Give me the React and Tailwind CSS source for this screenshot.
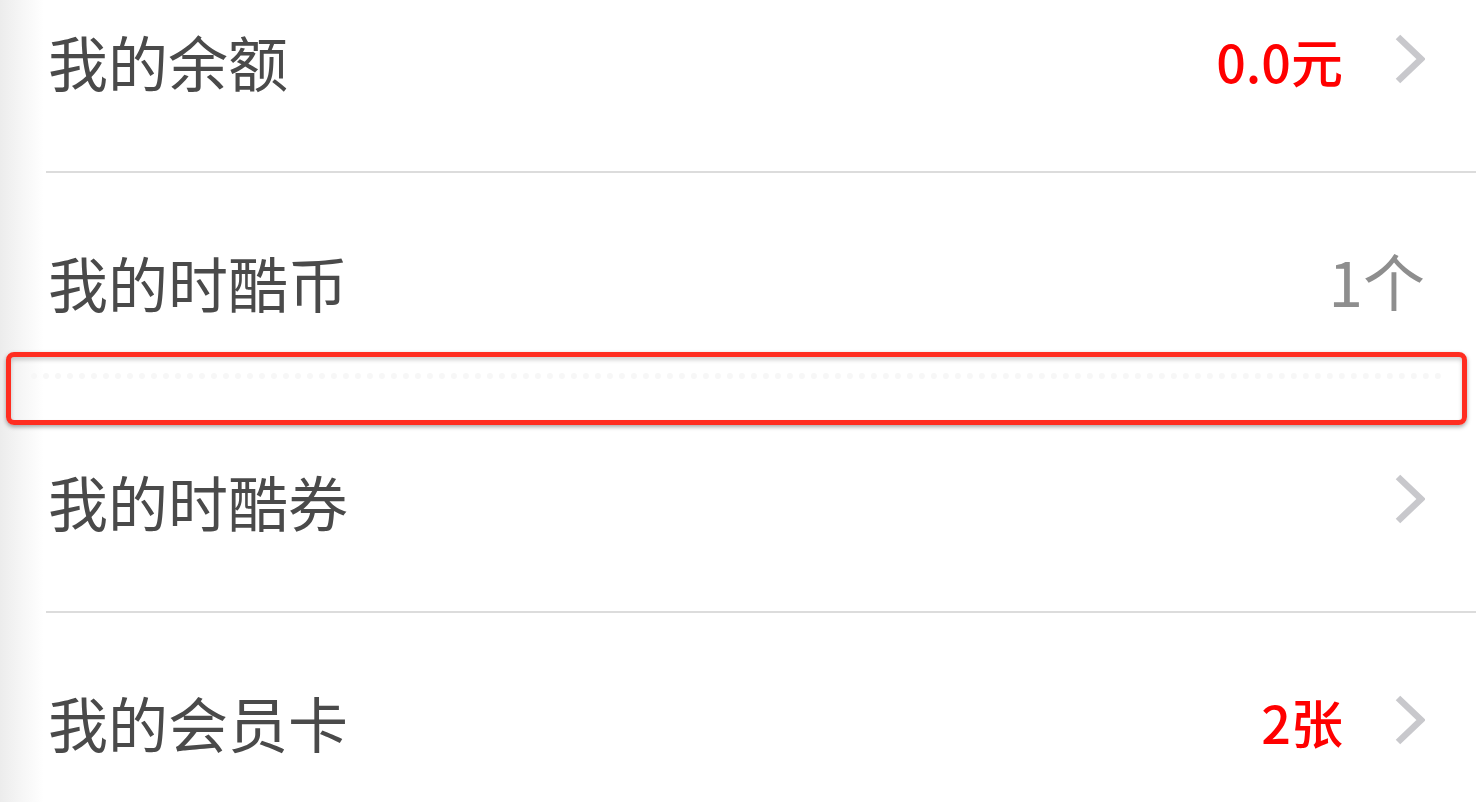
import React from "react";

const FONT = { fontFamily: '"Noto Sans CJK SC", "Noto Sans", sans-serif' };

function Chevron() {
  return (
    <svg width="30" height="50" viewBox="0 0 30 50" className="shrink-0">
      <polyline
        points="3,3 26,25 3,47"
        fill="none"
        stroke="#c8c8cc"
        strokeWidth="6.5"
        strokeLinejoin="miter"
      />
    </svg>
  );
}

function Row({ label, value, valueClass, chevron = true, border = true, first = false }) {
  return (
    <div className={`h-[220px] ml-[46px] flex items-center pb-[3px] pl-[2px] pr-[51px] ${border ? "border-b-2 border-[#dcdcdc]" : ""} ${first ? "-mt-[47px]" : ""}`}>
      <div className="flex-1 text-[60px] leading-none text-[#4a4a4a]">{label}</div>
      {value && <div className={valueClass}>{value}</div>}
      {chevron && <div className="ml-[52px] flex items-center -mt-[4px]"><Chevron /></div>}
    </div>
  );
}

export default function App() {
  return (
    <div
      className="relative w-full h-[802px] overflow-hidden bg-[linear-gradient(90deg,#ececec_0px,#f7f7f7_24px,#ffffff_44px)]"
      style={FONT}
    >
      <div className="flex flex-col">
        <Row
          first
          label="我的余额"
          value="0.0元"
          valueClass="text-[52px] leading-none font-medium text-[#ff0000]"
        />
        <Row
          label="我的时酷币"
          value="1个"
          chevron={false}
          border={false}
          valueClass="text-[62px] leading-none font-normal text-[#8e8e8e] -mt-[4px]"
        />
        <Row label="我的时酷券" />
        <Row
          label="我的会员卡"
          value="2张"
          valueClass="text-[52px] leading-none font-medium text-[#ff0000]"
          border={false}
        />
      </div>

      <div className="absolute left-[6px] top-[352px] w-[1461px] h-[73px] rounded-[8px] border-[5px] border-[#ff2d20] shadow-[0_2px_4px_rgba(0,0,0,0.35),inset_0_3px_4px_rgba(0,0,0,0.18)]">
        <div className="mt-[16px] mx-[20px] border-t-[6px] border-dotted border-[#f7f7f7]" />
      </div>
    </div>
  );
}
